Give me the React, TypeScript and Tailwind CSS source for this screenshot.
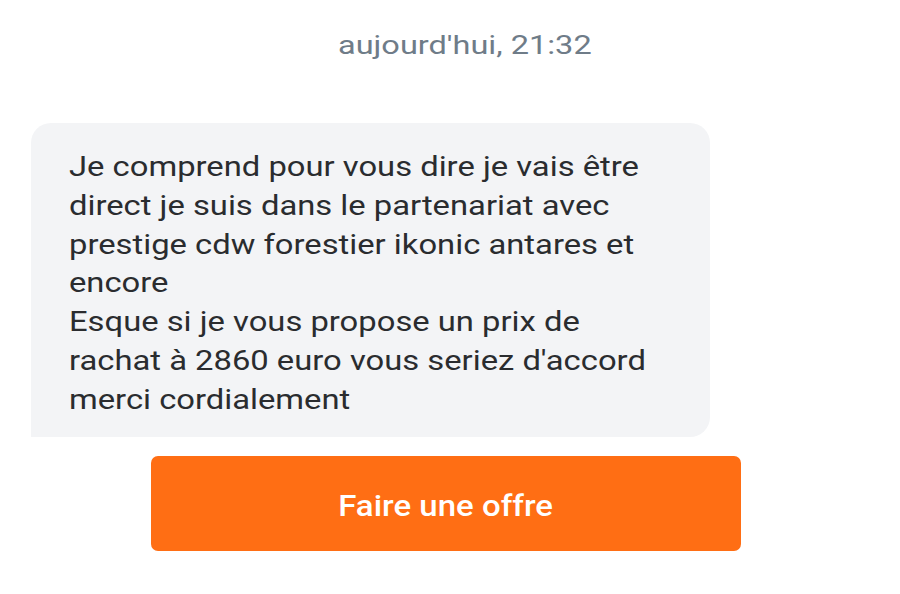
export default function App() {
  return (
    <div className="w-[900px] h-[594px] bg-white font-['Roboto',sans-serif] overflow-hidden">
      <div className="pt-[27px] pl-[338px] h-[64px]">
        <span className="inline-block origin-left scale-x-[1.3] text-[25px] leading-[38px] text-[#6f7c88]">
          aujourd'hui, 21:32
        </span>
      </div>
      <div className="mt-[59px] ml-[31px] w-[679px] h-[314px] bg-[#f3f4f6] rounded-t-[20px] rounded-br-[20px] pl-[38px] pt-[25px]">
        <p className="origin-left scale-x-[1.17] text-[28px] leading-[38.8px] text-[#2a2c2f]">
          Je comprend pour vous dire je vais être
          <br />
          direct je suis dans le partenariat avec
          <br />
          prestige cdw forestier ikonic antares et
          <br />
          encore
          <br />
          Esque si je vous propose un prix de
          <br />
          rachat à 2860 euro vous seriez d'accord
          <br />
          merci cordialement
        </p>
      </div>
      <button className="mt-[19px] ml-[151px] w-[590px] h-[95px] rounded-[7px] bg-[#ff6e14] text-white pt-[3px]">
        <span className="inline-block scale-x-[1.1] text-[30px] font-medium">
          Faire une offre
        </span>
      </button>
    </div>
  );
}
